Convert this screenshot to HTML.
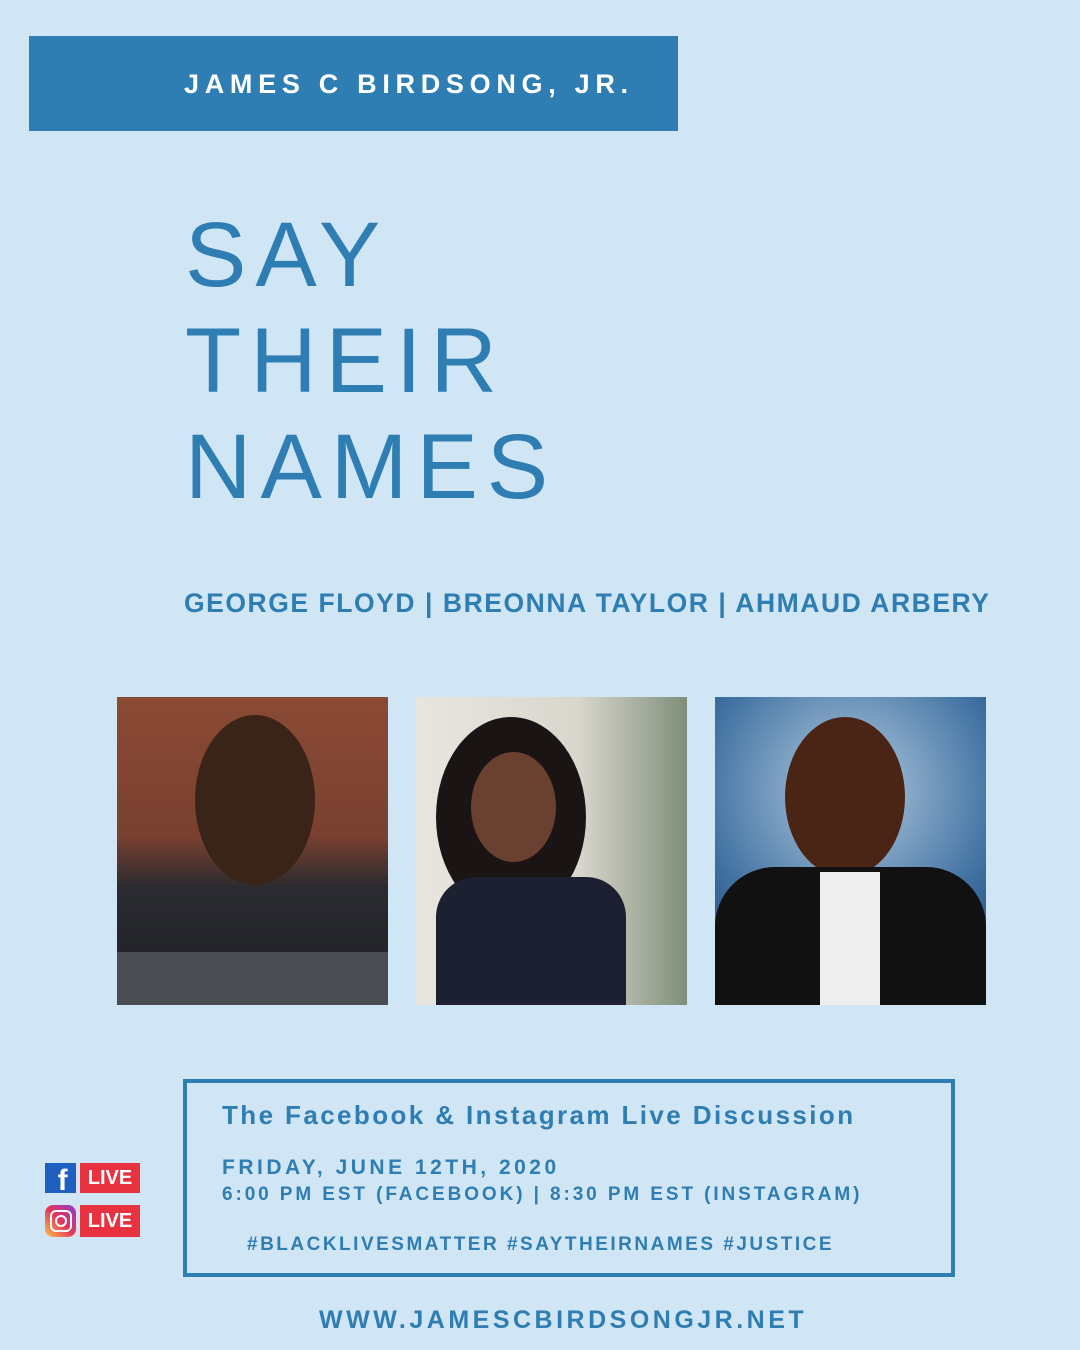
<!DOCTYPE html>
<html><head><style>
body{margin:0;width:1080px;height:1350px;background:#d1e6f4;position:relative;overflow:hidden;font-family:"Liberation Sans",sans-serif;color:#2e7db3}
.a{position:absolute;white-space:nowrap}
.photo{position:absolute;top:697px;height:308px;width:271px;overflow:hidden}
</style></head><body>
<div class="a" style="left:29px;top:36px;width:649px;height:95px;background:#2e7db3"></div>
<div class="a" style="left:184px;top:69px;font-size:27px;font-weight:bold;letter-spacing:5.7px;color:#fff">JAMES C BIRDSONG, JR.</div>
<div class="a" style="left:185px;top:202px;font-size:92px;line-height:106px;letter-spacing:9px">SAY<br>THEIR<br>NAMES</div>
<div class="a" style="left:184px;top:588px;font-size:26.5px;font-weight:bold;letter-spacing:1.55px">GEORGE FLOYD | BREONNA TAYLOR | AHMAUD ARBERY</div>
<div class="photo" style="left:117px;background:linear-gradient(180deg,#8a4a34 0%,#7a4030 45%,#2a2b30 62%,#1e1f24 100%)">
 <div style="position:absolute;left:78px;top:18px;width:120px;height:170px;border-radius:50%;background:#3a2418"></div>
 <div style="position:absolute;left:0;top:255px;width:271px;height:53px;background:#4a4d52"></div></div>
<div class="photo" style="left:416px;background:linear-gradient(90deg,#e8e6df 0%,#d9d6cd 60%,#7f8f7a 100%)">
 <div style="position:absolute;left:20px;top:20px;width:150px;height:200px;border-radius:50%;background:#1a1414"></div>
 <div style="position:absolute;left:55px;top:55px;width:85px;height:110px;border-radius:50%;background:#6a4030"></div>
 <div style="position:absolute;left:20px;top:180px;width:190px;height:128px;background:#1c2030;border-radius:40px 40px 0 0"></div></div>
<div class="photo" style="left:715px;background:radial-gradient(circle at 50% 30%,#b5cce0,#3d6fa0 60%,#203f6a)">
 <div style="position:absolute;left:70px;top:20px;width:120px;height:160px;border-radius:50%;background:#4a2414"></div>
 <div style="position:absolute;left:0;top:170px;width:271px;height:138px;background:#111;border-radius:60px 60px 0 0"></div>
 <div style="position:absolute;left:105px;top:175px;width:60px;height:133px;background:#eee"></div></div>
<div class="a" style="left:183px;top:1079px;width:764px;height:190px;border:4px solid #2e7db3"></div>
<div class="a" style="left:222px;top:1100px;font-size:26px;font-weight:bold;letter-spacing:2.4px">The Facebook &amp; Instagram Live Discussion</div>
<div class="a" style="left:222px;top:1156px;font-size:21px;font-weight:bold;letter-spacing:3.5px">FRIDAY, JUNE 12TH, 2020</div>
<div class="a" style="left:222px;top:1184px;font-size:19px;font-weight:bold;letter-spacing:2.9px">6:00 PM EST (FACEBOOK) | 8:30 PM EST (INSTAGRAM)</div>
<div class="a" style="left:247px;top:1234px;font-size:19px;font-weight:bold;letter-spacing:2.5px">#BLACKLIVESMATTER #SAYTHEIRNAMES #JUSTICE</div>
<div class="a" style="left:319px;top:1306px;font-size:25px;font-weight:bold;letter-spacing:3.5px">WWW.JAMESCBIRDSONGJR.NET</div>
<div class="a" style="left:45px;top:1163px;width:31px;height:30px;background:#1f5fbf;color:#fff;font-size:30px;font-weight:bold;text-align:right;line-height:36px;overflow:hidden">f&nbsp;</div>
<div class="a" style="left:80px;top:1163px;width:60px;height:30px;background:#e8323f;color:#fff;font-size:20px;font-weight:bold;text-align:center;line-height:30px">LIVE</div>
<div class="a" style="left:45px;top:1205px;width:31px;height:32px;border-radius:8px;background:linear-gradient(45deg,#fbc34a,#e7345a 50%,#8a3bd0)"></div>
<div class="a" style="left:50px;top:1210px;width:18px;height:18px;border:2.5px solid #fff;border-radius:6px"></div>
<div class="a" style="left:55px;top:1215px;width:8px;height:8px;border:2.5px solid #fff;border-radius:50%"></div>
<div class="a" style="left:80px;top:1205px;width:60px;height:32px;background:#e8323f;color:#fff;font-size:20px;font-weight:bold;text-align:center;line-height:32px">LIVE</div>
</body></html>
